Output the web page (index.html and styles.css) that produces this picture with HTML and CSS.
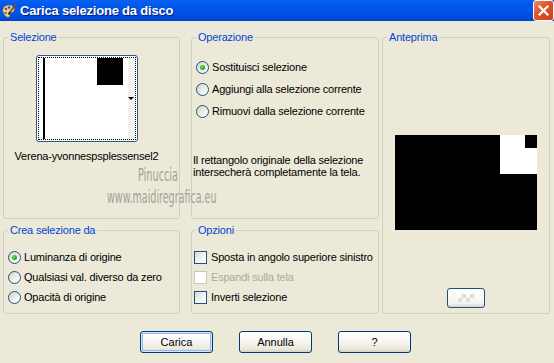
FILE: index.html
```html
<!DOCTYPE html>
<html lang="it">
  <head>
    <meta charset="UTF-8" />
    <meta name="viewport" content="width=device-width, initial-scale=1.0" />
    <title>Carica selezione da disco</title>
    <link rel="stylesheet" href="styles.css">
  </head>
  <body>
    <header class="titlebar">
      <svg class="app-icon" width="16" height="16" viewBox="0 0 16 16">
        <path d="M2 9 C1 5 4 2 8 2 C12 2 14 5 13 8 C12 10 10 9 9 10 C8 11 10 13 8 14 C5 15 3 12 2 9 Z" fill="#e9d3a4" stroke="#8a6b3c" stroke-width="0.8"/>
        <circle cx="5" cy="6" r="1.3" fill="#d9261c"/>
        <circle cx="8" cy="4.5" r="1.3" fill="#1b4fd8"/>
        <circle cx="4.5" cy="10" r="1.3" fill="#2ea02e"/>
        <circle cx="11" cy="5.5" r="1.2" fill="#f0c419"/>
        <path d="M15 1 L9 9" stroke="#7a4a1a" stroke-width="1.6"/>
        <path d="M9 9 L7.5 11.5" stroke="#333" stroke-width="2"/>
      </svg>
      <span class="title">Carica selezione da disco</span>
      <div class="close-btn">
        <svg width="19" height="19" viewBox="0 0 19 19">
          <path d="M5.5 5.5 L13.5 13.5 M13.5 5.5 L5.5 13.5" stroke="#fff" stroke-width="2.2" stroke-linecap="square"/>
        </svg>
      </div>
    </header>

    <main class="dialog">
      <div class="col col-left">
        <fieldset class="group group-top">
          <legend>Selezione</legend>
          <div class="sel-content">
            <div class="thumb">
              <div class="thumb-inner">
                <div class="thumb-bar"></div>
                <div class="thumb-canvas">
                  <div class="thumb-block"></div>
                </div>
                <div class="thumb-strip"><span class="arrow"></span></div>
              </div>
            </div>
            <div class="sel-name">Verena-yvonnespsplessensel2</div>
          </div>
        </fieldset>
        <fieldset class="group group-bottom">
          <legend>Crea selezione da</legend>
          <div class="options options-tight">
            <label class="opt"><span class="radio checked"></span>Luminanza di origine</label>
            <label class="opt"><span class="radio"></span>Qualsiasi val. diverso da zero</label>
            <label class="opt"><span class="radio"></span>Opacità di origine</label>
          </div>
        </fieldset>
      </div>

      <div class="col col-mid">
        <fieldset class="group group-top">
          <legend>Operazione</legend>
          <div class="options options-wide">
            <label class="opt"><span class="radio checked"></span>Sostituisci selezione</label>
            <label class="opt"><span class="radio"></span>Aggiungi alla selezione corrente</label>
            <label class="opt"><span class="radio"></span>Rimuovi dalla selezione corrente</label>
          </div>
          <p class="note">Il rettangolo originale della selezione<br>intersecherà completamente la tela.</p>
        </fieldset>
        <fieldset class="group group-bottom">
          <legend>Opzioni</legend>
          <div class="options options-tight options-check">
            <label class="opt"><span class="check"></span>Sposta in angolo superiore sinistro</label>
            <label class="opt disabled"><span class="check"></span>Espandi sulla tela</label>
            <label class="opt"><span class="check"></span>Inverti selezione</label>
          </div>
        </fieldset>
      </div>

      <fieldset class="group group-preview">
        <legend>Anteprima</legend>
        <div class="preview">
          <div class="pv-white"><div class="pv-black"></div></div>
        </div>
        <div class="pv-btn"><span class="checker"></span></div>
      </fieldset>
    </main>

    <footer class="buttons">
      <button class="btn default">Carica</button>
      <button class="btn">Annulla</button>
      <button class="btn">?</button>
    </footer>

    <div class="watermark">
      <div class="wm-name">Pinuccia</div>
      <div class="wm-url">www.maidiregrafica.eu</div>
    </div>
  </body>
</html>
```

FILE: styles.css
```css
body {
  margin: 0;
  width: 554px;
  height: 363px;
  background: #ece9d8;
  font-family: "Liberation Sans", Arial, sans-serif;
  font-size: 11px;
  letter-spacing: -0.2px;
  color: #000;
  position: relative;
  overflow: hidden;
}
.titlebar {
  height: 21px;
  display: flex;
  align-items: center;
  background: linear-gradient(#0a62f0 0%, #0058ee 20%, #0053e6 60%, #0048d8 90%, #0040c0 100%);
  color: #fff;
}
.app-icon {
  margin: 0 3px 0 1px;
}
.title {
  font-weight: bold;
  font-size: 13px;
  letter-spacing: -0.2px;
  text-shadow: 1px 1px 0 #0a1e7a;
  flex: 1;
}
.close-btn {
  width: 19px;
  height: 19px;
  border: 1px solid #fff;
  border-radius: 3px;
  background: linear-gradient(135deg, #ec8a6c 0%, #e0582f 40%, #c7401a 100%);
  display: flex;
}
.dialog {
  display: flex;
  padding: 10px 0 0 3px;
  height: 283px;
}
.col {
  display: flex;
  flex-direction: column;
  gap: 5px;
}
.col-left {
  width: 177px;
  margin-right: 11px;
}
.col-mid {
  width: 188px;
  margin-right: 3px;
}
.group {
  margin: 0;
  padding: 0;
  border: 1px solid #d0d0bf;
  border-radius: 3px;
  box-sizing: border-box;
  min-width: 0;
}
.group legend {
  color: #0046d5;
  line-height: 13px;
  padding: 0 2px;
  margin-left: 4px;
}
.group-top {
  height: 188px;
}
.group-bottom {
  height: 90px;
}
.group-preview {
  width: 168px;
  height: 283px;
  display: flex;
  flex-direction: column;
  align-items: center;
}
.sel-content {
  display: flex;
  flex-direction: column;
  align-items: center;
  padding: 11px 10px 0 0;
}
.thumb {
  width: 102px;
  height: 87px;
  box-sizing: border-box;
  border: 1px solid #2c5a8c;
  border-radius: 3px;
  padding: 1px;
  background: #fff;
}
.thumb-inner {
  height: 100%;
  box-sizing: border-box;
  border: 1px dotted #000;
  display: flex;
}
.thumb-bar {
  width: 2px;
  background: #000;
  margin-left: 4px;
}
.thumb-canvas {
  flex: 1;
  display: flex;
  justify-content: flex-end;
  align-items: flex-start;
  padding-right: 5px;
}
.thumb-block {
  width: 26px;
  height: 27px;
  background: #000;
}
.thumb-strip {
  width: 7px;
  background: #f2f2f0;
  display: flex;
  align-items: center;
  justify-content: center;
}
.arrow {
  width: 0;
  height: 0;
  border-left: 3px solid transparent;
  border-right: 3px solid transparent;
  border-top: 3px solid #000;
}
.sel-name {
  margin-top: 8px;
  line-height: 13px;
}
.options {
  display: flex;
  flex-direction: column;
}
.options-wide {
  padding: 12px 0 0 4px;
}
.options-wide .opt {
  height: 22px;
}
.options-tight {
  padding: 10px 0 0 4px;
}
.options-tight .opt {
  height: 20px;
}
.options-check {
  padding-left: 2px;
}
.opt {
  display: flex;
  align-items: center;
  gap: 3px;
  white-space: nowrap;
}
.opt.disabled {
  color: #aca899;
}
.radio {
  width: 13px;
  height: 13px;
  box-sizing: border-box;
  border: 1px solid #1c5180;
  border-radius: 50%;
  background: linear-gradient(135deg, #d6d3c6 0%, #f2f1ec 60%, #fff 100%);
  display: flex;
  align-items: center;
  justify-content: center;
}
.radio.checked::after {
  content: "";
  width: 5px;
  height: 5px;
  border-radius: 50%;
  background: radial-gradient(circle at 35% 35%, #5ee05e, #21a121 70%);
}
.check {
  width: 13px;
  height: 13px;
  box-sizing: border-box;
  border: 1px solid #1c5180;
  background: linear-gradient(135deg, #dcdcd7 0%, #f4f4f0 60%, #fff 100%);
  margin-right: 1px;
}
.disabled .check {
  border-color: #cac8bb;
  background: #fff;
}
.note {
  margin: 32px 0 0 1px;
  line-height: 12px;
}
.preview {
  width: 142px;
  height: 95px;
  margin-top: 91px;
  background: #000;
  display: flex;
  justify-content: flex-end;
  align-items: flex-start;
}
.pv-white {
  width: 37px;
  height: 39px;
  background: #fff;
  display: flex;
  justify-content: flex-end;
}
.pv-black {
  width: 12px;
  height: 13px;
  background: #000;
}
.pv-btn {
  width: 38px;
  height: 20px;
  box-sizing: border-box;
  margin-top: 58px;
  border: 1px solid #1c5180;
  border-radius: 3px;
  background: linear-gradient(#fff, #f4f3ee 80%, #d8d5c8);
  display: flex;
  align-items: center;
  justify-content: center;
}
.checker {
  width: 16px;
  height: 8px;
  background-image: linear-gradient(45deg, #dcdcdc 25%, transparent 25%, transparent 75%, #dcdcdc 75%),
    linear-gradient(45deg, #dcdcdc 25%, transparent 25%, transparent 75%, #dcdcdc 75%);
  background-size: 8px 8px;
  background-position: 0 0, 4px 4px;
}
.buttons {
  display: flex;
  justify-content: center;
  gap: 26px;
  margin-top: 17px;
  padding-right: 3px;
}
.btn {
  width: 73px;
  height: 22px;
  border: 1px solid #003c74;
  border-radius: 3px;
  background: linear-gradient(#fff 0%, #f6f5f0 50%, #ebe8dc 85%, #d6d0c5 100%);
  font-family: "Liberation Sans", Arial, sans-serif;
  font-size: 11px;
  color: #000;
  padding: 0;
}
.btn.default {
  box-shadow: inset 0 0 0 1px #cee7ff, inset 0 0 0 2px #98b8ea;
}
.watermark {
  position: absolute;
  left: 107px;
  top: 164px;
  width: 110px;
  color: #a3a19a;
  font-family: "DejaVu Sans", sans-serif;
  font-stretch: condensed;
  font-size: 18px;
  line-height: 22px;
  letter-spacing: 0;
}
.wm-name {
  margin-left: 31px;
  transform: scaleX(0.6);
  transform-origin: left;
}
.wm-url {
  white-space: nowrap;
  transform: scaleX(0.59);
  transform-origin: left;
}
```
